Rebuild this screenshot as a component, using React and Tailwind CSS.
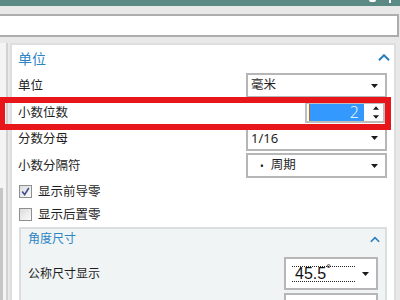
import React from "react";

// small filled triangle used by the combo boxes
function Caret({ up = false, className = "" }) {
  return (
    <svg width="7" height="4" viewBox="0 0 7 4" className={className}>
      <polygon points={up ? "0,4 7,4 3.5,0" : "0,0 7,0 3.5,4"} fill="#1a1a1a" />
    </svg>
  );
}

function Chevron({ className = "" }) {
  return (
    <svg width="12" height="7" viewBox="0 0 12 7" className={className}>
      <polyline points="1,6.2 6,1.2 11,6.2" fill="none" stroke="#2a7fc0" strokeWidth="2" />
    </svg>
  );
}

function Combo({ children }) {
  return (
    <div className="flex h-[25px] w-[141px] items-center justify-between border-2 border-[#b6b6b6] bg-white pl-[3px] pr-[7px]">
      <div className="flex items-center text-[12.5px] leading-none text-[#1f1f1f]">{children}</div>
      <Caret />
    </div>
  );
}

function Checkbox({ checked }) {
  return (
    <div className="flex h-[13px] w-[13px] items-center justify-center border border-[#8e8f8f] bg-gradient-to-br from-[#dcdcdc] to-[#fbfbfb]">
      {checked && (
        <svg width="9" height="9" viewBox="0 0 9 9">
          <path d="M1.2 4.6 L3.6 7.6 L7.8 1" fill="none" stroke="#3c4f8e" strokeWidth="1.6" />
        </svg>
      )}
    </div>
  );
}

function Row({ label, h, children, className = "" }) {
  return (
    <div className={`flex shrink-0 items-center justify-between ${h} ${className}`}>
      <span className="pt-[2px] text-[12.5px] leading-none">{label}</span>
      {children}
    </div>
  );
}

export default function App() {
  return (
    <div className="relative h-[300px] w-[400px] overflow-hidden bg-[#e8e8e8] font-['Noto_Sans','Noto_Sans_CJK_SC',sans-serif] text-[#1f1f1f]">
      {/* title bar */}
      <div className="relative h-[6px] bg-[#5b8a84]">
        <div className="absolute left-[369px] top-0 h-[2px] w-[7px] rounded-b-full bg-white" />
        <div className="absolute left-[389px] top-0 h-[3px] w-[2px] bg-white" />
      </div>

      {/* search box */}
      <div className="-ml-[2px] mt-[8px] h-[23px] w-[401px] border-2 border-[#adadad] bg-white" />

      <div className="mt-[6px] flex gap-[2px]">
        {/* left strip */}
        <div className="flex w-[8px] flex-col border-r-2 border-[#d2d2d2] bg-[#f4f4f4]">
          <div className="mt-[145px] h-full w-[3px] bg-[#c6c6c6]" />
        </div>

        {/* main panel */}
        <div className="flex w-[386px] flex-col border-2 border-b-0 border-[#dedede] bg-white pb-[20px] pl-[6px] pr-[7px]">
          <div className="flex h-[27px] shrink-0 items-center justify-between">
            <span className="text-[14px] leading-none text-[#2d86c4]">单位</span>
            <Chevron className="-mr-[3px] -mt-[3px]" />
          </div>

          <Row label="单位" h="h-[27px]">
            <Combo>毫米</Combo>
          </Row>

          <Row label="小数位数" h="h-[26px]">
            <div className="mr-[2px] flex h-[21px] w-[80px] items-center border-2 border-[#bdbdbd] bg-white pl-[2px] pr-[4px]">
              <div className="flex h-[17px] w-[55px] items-center justify-end border-l border-[#c86a1a] bg-[#3399ff] pr-[5px] font-['Open_Sans',sans-serif] text-[16px] font-light leading-none text-white">
                2
              </div>
              <div className="ml-auto flex flex-col gap-[5px]">
                <Caret up className="w-[6px]" />
                <Caret className="w-[6px]" />
              </div>
            </div>
          </Row>

          <Row label="分数分母" h="h-[26px]">
            <Combo>
              <span className="text-[13px]">1/16</span>
            </Combo>
          </Row>

          <Row label="小数分隔符" h="h-[25px]" className="mt-[2px]">
            <Combo>
              <span className="ml-[9px] mr-[7px] text-[10px]">•</span>
              <span>周期</span>
            </Combo>
          </Row>

          <div className="flex h-[26px] shrink-0 items-center gap-[6px] pl-[1px]">
            <Checkbox checked />
            <span className="pt-[2px] text-[12.5px] leading-none">显示前导零</span>
          </div>
          <div className="flex h-[20px] shrink-0 items-center gap-[6px] pl-[1px]">
            <Checkbox />
            <span className="pt-[2px] text-[12.5px] leading-none">显示后置零</span>
          </div>

          {/* angular dimension group */}
          <div className="ml-[1px] mt-[3px] flex shrink-0 flex-col border-2 border-[#dcdfe0] bg-[#f0f4f5] pb-[10px] pl-[7px] pr-[5px]">
            <div className="flex h-[19px] items-center justify-between">
              <span className="text-[12px] leading-none text-[#2d86c4]">角度尺寸</span>
              <Chevron className="mt-[2px] w-[10px]" />
            </div>
            <div className="mt-[9px] flex h-[33px] items-center justify-between">
              <span className="text-[12px] leading-none">公称尺寸显示</span>
              <div className="mr-[2px] flex h-[33px] w-[94px] items-center justify-between border-2 border-[#b6b6b6] bg-white pl-[6px] pr-[7px]">
                <div className="flex h-[16px] w-[63px] items-center border-y border-dotted border-[#222] pl-[3px] font-['Liberation_Sans',sans-serif] text-[16px] leading-none text-[#111]">
                  45.5<span className="-mt-[9px] text-[12px]">°</span>
                </div>
                <Caret />
              </div>
            </div>
            <div className="mr-[2px] mt-[3px] h-[25px] w-[94px] self-end border-2 border-[#b6b6b6] bg-white" />
          </div>
        </div>
      </div>

      {/* red highlight annotation */}
      <div className="absolute left-[-1px] top-[97px] h-[33px] w-[392px] border-[6px] border-[#e8151b]" />
    </div>
  );
}
